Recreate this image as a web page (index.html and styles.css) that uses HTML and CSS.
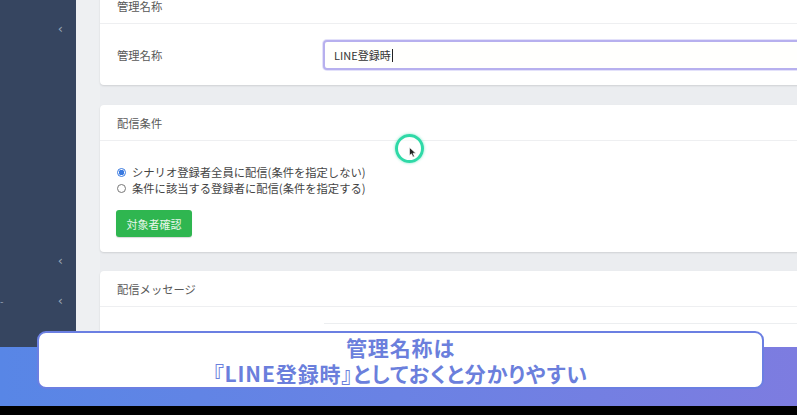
FILE: index.html
```html
<!DOCTYPE html>
<html lang="ja">
<head>
<meta charset="utf-8">
<link rel="stylesheet" href="styles.css">
</head>
<body>
<div class="app">
  <div class="main">
    <aside class="sidebar">
      <div class="nav-item first"><span class="chev">‹</span></div>
      <div class="nav-item second"><span class="chev">‹</span></div>
      <div class="nav-item third"><span class="dash">-</span><span class="chev">‹</span></div>
    </aside>
    <section class="content">
      <div class="card c1">
        <div class="card-head">管理名称</div>
        <div class="card-body row">
          <div class="label">管理名称</div>
          <div class="input">LINE登録時<span class="caret"></span></div>
        </div>
      </div>
      <div class="card c2">
        <div class="card-head">配信条件</div>
        <div class="card-body cond">
          <div class="radio-line"><span class="radio on"></span>シナリオ登録者全員に配信(条件を指定しない)</div>
          <div class="radio-line"><span class="radio"></span>条件に該当する登録者に配信(条件を指定する)</div>
          <div class="btn">対象者確認</div>
        </div>
      </div>
      <div class="card c3">
        <div class="card-head">配信メッセージ</div>
        <div class="card-body msg">
          <div class="msg-box"></div>
        </div>
      </div>
    </section>
  </div>
  <div class="band"></div>
  <div class="black"></div>

  <div class="cursor-ring"><svg class="arrow" width="8" height="11" viewBox="0 0 8 11"><path d="M0.5 0.5 L0.5 8.5 L2.5 6.8 L4 10 L5.4 9.4 L4 6.2 L6.8 6.2 Z" fill="#222" stroke="#fff" stroke-width="0.6"/></svg></div>

  <div class="caption">
    <div class="cap-line">管理名称は</div>
    <div class="cap-line">『LINE登録時』としておくと分かりやすい</div>
  </div>
</div>
</body>
</html>
```
FILE: styles.css
```css
* { box-sizing: border-box; }
html, body { margin: 0; padding: 0; }
body {
  width: 797px;
  height: 415px;
  overflow: hidden;
  font-family: "Noto Sans CJK JP", "Noto Sans", sans-serif;
  background: #000;
}
.app {
  position: relative;
  width: 797px;
  height: 415px;
  display: flex;
  flex-direction: column;
}
.main {
  height: 347px;
  display: flex;
  overflow: hidden;
  background: #ebedf0;
}
.sidebar {
  width: 76px;
  flex: none;
  background: #364560;
  display: flex;
  flex-direction: column;
}
.nav-item {
  height: 40px;
  display: flex;
  align-items: center;
  justify-content: flex-end;
  padding-right: 13px;
  position: relative;
}
.nav-item.first { margin-top: 8px; }
.nav-item.second { margin-top: 192px; }
.chev {
  color: #9aa5b8;
  font-size: 13px;
  line-height: 1;
  font-family: "DejaVu Sans", sans-serif;
}
.dash {
  color: #9aa5b8;
  font-size: 10px;
  margin-right: auto;
  margin-left: 0;
}
.content {
  flex: 1;
  padding-left: 24px;
  background: linear-gradient(90deg, #eef0f2 0, #eef0f2 24px, #ebedf0 24px);
  display: flex;
  flex-direction: column;
  overflow: hidden;
}
.card {
  width: 720px;
  flex: none;
  background: #fff;
  border-radius: 4px;
  box-shadow: 0 1px 2px rgba(0,0,0,0.12);
}
.c1 { margin-top: -12px; }
.c2 { margin-top: 20px; }
.c3 { margin-top: 19px; }
.card-head {
  height: 36px;
  padding-left: 17px;
  display: flex;
  align-items: center;
  font-size: 11.3px;
  color: #585858;
  border-bottom: 1px solid #eeeff1;
}
.card-body.row {
  display: flex;
  align-items: center;
  padding: 16px 0 15px 17px;
}
.label {
  width: 206px;
  font-size: 11.3px;
  color: #585858;
}
.input {
  flex: 1;
  height: 30px;
  border: 2px solid #b7b0ee;
  border-radius: 4px;
  background: #fffffd;
  display: flex;
  align-items: center;
  padding-left: 9px;
  font-size: 11px;
  color: #333;
  box-shadow: 0 0 0 1px rgba(200,195,245,0.5);
}
.caret {
  width: 1px;
  height: 13px;
  background: #222;
  margin-left: 1px;
}
.card-body.cond {
  padding: 23px 0 15px 16px;
  display: flex;
  flex-direction: column;
  align-items: flex-start;
}
.radio-line {
  height: 16px;
  display: flex;
  align-items: center;
  font-size: 11.3px;
  color: #444;
}
.radio {
  width: 9px;
  height: 9px;
  border-radius: 50%;
  border: 1px solid #777;
  margin-right: 6px;
  margin-left: 1px;
  background: #fff;
}
.radio.on {
  border: 1px solid #3a7ae0;
  background: radial-gradient(circle, #3a7ae0 0 2.6px, #fff 3px);
}
.btn {
  margin-top: 14px;
  width: 76px;
  height: 27px;
  border-radius: 3px;
  background: #2fb650;
  color: #e9f7ec;
  font-size: 11px;
  display: flex;
  align-items: center;
  justify-content: center;
  box-shadow: 0 1px 1px rgba(0,0,0,0.15);
}
.card-body.msg {
  padding: 16px 0 40px 224px;
}
.msg-box {
  height: 40px;
  border-top: 1px solid #eceef0;
}
.band {
  height: 59px;
  background: linear-gradient(90deg, #5886e6 0%, #6a82e4 50%, #7d7ce0 100%);
}
.black {
  height: 9px;
  background: #000;
}
.cursor-ring {
  position: absolute;
  left: 395px;
  top: 134px;
  width: 29px;
  height: 29px;
  border-radius: 50%;
  border: 3px solid #2fd9a7;
  box-shadow: 0 0 3px rgba(47,217,167,0.6);
  background: rgba(255,255,255,0.6);
}
.arrow {
  position: absolute;
  left: 11px;
  top: 10px;
}
.caption {
  position: absolute;
  left: 37px;
  top: 331px;
  width: 727px;
  height: 58px;
  background: #fff;
  border: 2px solid #6b7fe2;
  border-radius: 9px;
  display: flex;
  flex-direction: column;
  align-items: center;
  justify-content: center;
  color: #6b7fdc;
  font-weight: 700;
  font-size: 21px;
  line-height: 26px;
  letter-spacing: 0.9px;
  font-feature-settings: "palt" 1;
}
.cap-line { white-space: nowrap; height: 26px; }
```
